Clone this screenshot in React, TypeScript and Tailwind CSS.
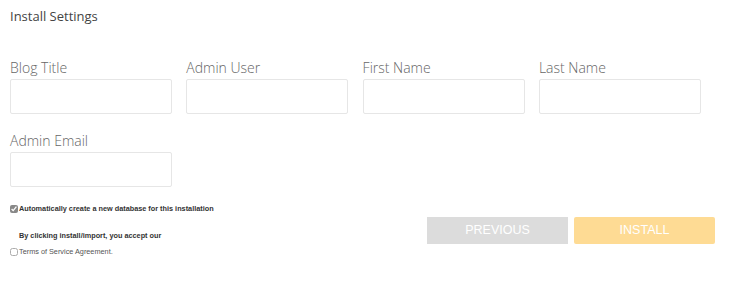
import { useState } from 'react'

const fields = ['Blog Title', 'Admin User', 'First Name', 'Last Name', 'Admin Email']

export default function App(): React.JSX.Element {
  const [autoDb, setAutoDb] = useState(true)
  const [tos, setTos] = useState(false)

  return (
    <div className="h-[286px] w-[730px] bg-white pl-[10px] pt-[6px] font-['Open_Sans',sans-serif]">
      <h2 className="text-[13px] leading-[20px] text-[#444]">Install Settings</h2>

      <div className="mt-[32px] grid grid-cols-[repeat(4,162px)] gap-x-[14.3px] gap-y-[17px]">
        {fields.map((f) => (
          <div key={f} className="flex flex-col">
            <label className="text-[14px] font-light leading-[20px] text-[#666]">{f}</label>
            <input
              type="text"
              className="mt-[1px] h-[35px] w-[162px] rounded-[2px] border border-[#e6e6e6] bg-white outline-none"
            />
          </div>
        ))}
      </div>

      <div className="mt-[17px] flex">
        <div className="flex w-[417px] flex-col font-['Liberation_Sans',sans-serif] text-[7.3px] font-bold text-[#333]">
          <label className="flex items-center leading-[9px]">
            <input
              type="checkbox"
              checked={autoDb}
              onChange={() => setAutoDb(!autoDb)}
              className="m-0 h-[8px] w-[8px] accent-[#888]"
            />
            <span className="ml-[1px]">Automatically create a new database for this installation</span>
          </label>
          <p className="ml-[9px] mt-[18px] leading-[9px]">By clicking install/import, you accept our</p>
          <label className="mt-[7px] flex items-center font-normal leading-[9px] text-[#555]">
            <input
              type="checkbox"
              checked={tos}
              onChange={() => setTos(!tos)}
              className="m-0 h-[8px] w-[8px] opacity-60"
            />
            <span className="ml-[1px]">Terms of Service Agreement.</span>
          </label>
        </div>
        <div className="mt-[13px] flex gap-[6px]">
          <button
            type="button"
            className="h-[27px] w-[141px] bg-[#dcdcdc] font-['Liberation_Sans',sans-serif] text-[12.5px] text-white"
          >
            PREVIOUS
          </button>
          <button
            type="button"
            className="h-[27px] w-[141px] rounded-[2px] bg-[#fedb94] font-['Liberation_Sans',sans-serif] text-[12.5px] text-white"
          >
            INSTALL
          </button>
        </div>
      </div>
    </div>
  )
}
